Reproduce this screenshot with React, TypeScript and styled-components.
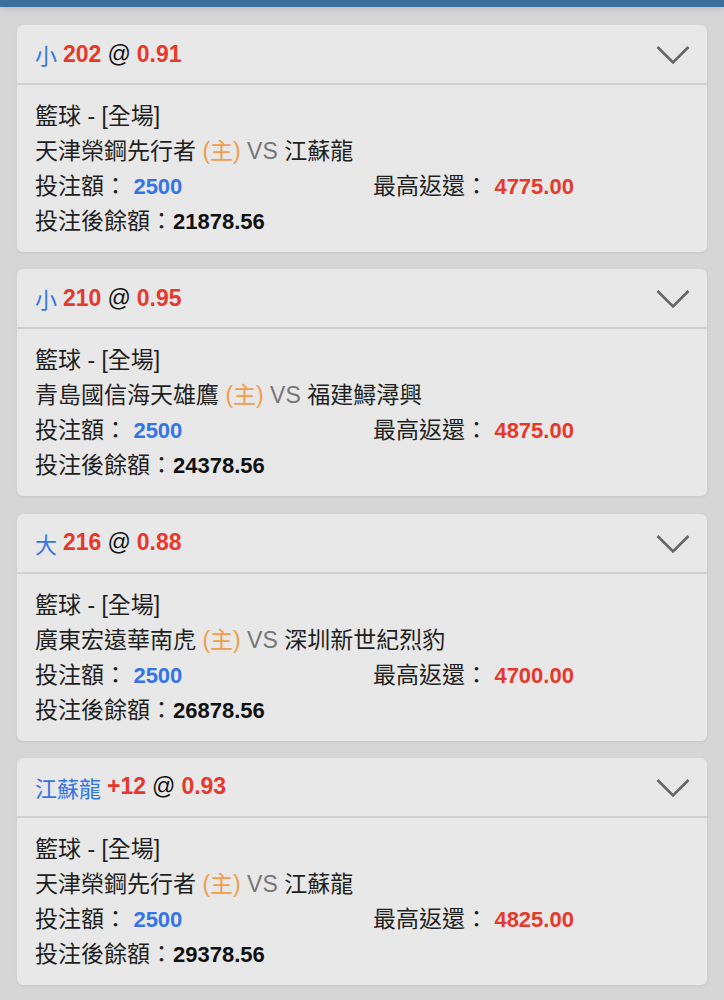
import React from 'react';
import styled, { createGlobalStyle } from 'styled-components';

const GlobalStyle = createGlobalStyle`
  html, body {
    margin: 0;
    padding: 0;
    background: #d6d6d6;
  }
  body {
    font-family: 'Liberation Sans', 'Noto Sans CJK TC', sans-serif;
    color: #1f1f1f;
  }
`;

const Page = styled.div`
  width: 724px;
  min-height: 1000px;
  background: #d6d6d6;
`;

const TopBar = styled.div`
  height: 7px;
  background: #3c6f9c;
  box-shadow: 0 2px 6px rgba(0, 0, 0, 0.12);
`;

const List = styled.div`
  display: flex;
  flex-direction: column;
  gap: 17.3px;
  padding: 18px 17px 0 17px;
`;

const Card = styled.div`
  background: #e8e8e8;
  border-radius: 6px;
  box-shadow: 0 1px 3px rgba(0, 0, 0, 0.08);
  overflow: hidden;
`;

const Header = styled.div`
  height: 58px;
  display: flex;
  align-items: center;
  justify-content: space-between;
  padding: 0 17px 0 18px;
  border-bottom: 2px solid #d0d0d0;
`;

const Title = styled.div`
  font-size: 23px;
  font-weight: 700;
  display: flex;
  align-items: center;
  gap: 6px;
  white-space: pre;
`;

const Tint = styled.span<{ tone: 'blue' | 'red' | 'dark' }>`
  color: ${({ tone }) =>
    tone === 'blue' ? '#3574e6' : tone === 'red' ? '#e6392b' : '#111111'};
  font-weight: ${({ tone }) => (tone === 'dark' ? 400 : 700)};
`;

const TeamPick = styled.span`
  color: #3574e6;
  font-weight: 400;
  font-size: 22px;
  font-family: 'Noto Sans CJK TC', sans-serif;
`;

const Chevron = styled.svg`
  width: 34px;
  height: 20px;
  margin-top: 2px;
`;

const Body = styled.div`
  padding: 14px 18px 13px 18px;
  font-family: 'Liberation Sans', 'Noto Sans CJK TC', sans-serif;
  font-size: 23px;
  line-height: 35px;
`;

const Line = styled.div`
  white-space: pre;
`;

const Home = styled.span`
  color: #f19d4c;
`;

const Vs = styled.span`
  color: #777777;
`;

const Amounts = styled.div`
  display: grid;
  grid-template-columns: 338px 1fr;
`;

const Value = styled.span<{ tone: 'blue' | 'red' | 'dark' }>`
  font-size: 22px;
  font-weight: 700;
  color: ${({ tone }) =>
    tone === 'blue' ? '#3574e6' : tone === 'red' ? '#e6392b' : '#111111'};
`;

interface Bet {
  pick: string;
  line: string;
  odds: string;
  home: string;
  away: string;
  stake: string;
  payout: string;
  balance: string;
}

const bets: Bet[] = [
  { pick: '小', line: '202', odds: '0.91', home: '天津榮鋼先行者', away: '江蘇龍', stake: '2500', payout: '4775.00', balance: '21878.56' },
  { pick: '小', line: '210', odds: '0.95', home: '青島國信海天雄鷹', away: '福建鱘潯興', stake: '2500', payout: '4875.00', balance: '24378.56' },
  { pick: '大', line: '216', odds: '0.88', home: '廣東宏遠華南虎', away: '深圳新世紀烈豹', stake: '2500', payout: '4700.00', balance: '26878.56' },
  { pick: '江蘇龍', line: '+12', odds: '0.93', home: '天津榮鋼先行者', away: '江蘇龍', stake: '2500', payout: '4825.00', balance: '29378.56' },
];

const BetCard: React.FC<{ bet: Bet }> = ({ bet }) => (
  <Card>
    <Header>
      <Title>
        <TeamPick>{bet.pick}</TeamPick>
        <Tint tone="red">{bet.line}</Tint>
        <Tint tone="dark">@</Tint>
        <Tint tone="red">{bet.odds}</Tint>
      </Title>
      <Chevron viewBox="0 0 34 20">
        <polyline points="1.5,2 17,17.5 32.5,2" fill="none" stroke="#666" strokeWidth="2.6" />
      </Chevron>
    </Header>
    <Body>
      <Line>籃球 - [全場]</Line>
      <Line>
        {bet.home} <Home>(主)</Home> <Vs>VS</Vs> {bet.away}
      </Line>
      <Amounts>
        <Line>
          投注額： <Value tone="blue">{bet.stake}</Value>
        </Line>
        <Line>
          最高返還： <Value tone="red">{bet.payout}</Value>
        </Line>
      </Amounts>
      <Line>
        投注後餘額：<Value tone="dark">{bet.balance}</Value>
      </Line>
    </Body>
  </Card>
);

export default function App() {
  return (
    <Page>
      <GlobalStyle />
      <TopBar />
      <List>
        {bets.map((b, i) => (
          <BetCard key={i} bet={b} />
        ))}
      </List>
    </Page>
  );
}
